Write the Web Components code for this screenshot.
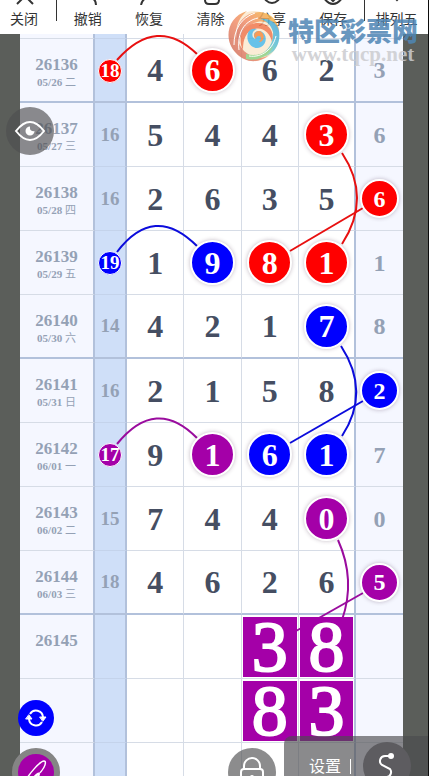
<!DOCTYPE html>
<html lang="zh-CN">
<head>
<meta charset="UTF-8">
<meta name="viewport" content="width=device-width, initial-scale=1">
<title>排列五</title>
<style>
    :root {
        --ink: #454e62;
        --muted: #94a1b5;
        --line: #d6dce6;
        --line-strong: #b2c1db;
        --side: #f5f7ff;
        --sum: #cfdff8;
        --red: #ff0000;
        --blue: #0000ff;
        --purple: #a400a8;
        --sans: "Noto Sans CJK SC", "Noto Sans", sans-serif;
        --serif: "Liberation Serif", "Noto Sans CJK SC", serif;
    }
    body {
        margin: 0;
        background: #5b5e5a;
        font-family: var(--sans);
    }
</style>
</head>
<body>
<trend-app>
    <app-toolbar slot="toolbar">
        <tool-button class="first" label="关闭" icon="close"></tool-button>
        <tool-button label="撤销" icon="undo"></tool-button>
        <tool-button label="恢复" icon="redo"></tool-button>
        <tool-button label="清除" icon="clear"></tool-button>
        <tool-button label="分享" icon="share"></tool-button>
        <tool-button label="保存" icon="save"></tool-button>
        <tool-button class="last" label="排列五" icon="more"></tool-button>
    </app-toolbar>
    <trend-board></trend-board>
    <site-watermark slot="overlay"></site-watermark>
    <round-button slot="overlay" class="eye" label="显示" icon="eye"></round-button>
    <round-button slot="overlay" class="refresh" label="刷新" icon="refresh"></round-button>
    <round-button slot="overlay" class="pen" label="画笔" icon="pen"></round-button>
    <round-button slot="overlay" class="lock" label="锁定" icon="lock"></round-button>
    <settings-bar slot="overlay"></settings-bar>
</trend-app>

<script>
const TOOL_ICONS = {
    close: '<path d="M5 23l8-8M21 23l-8-8"/>',
    undo: '<path d="M16 17q4 2 4 7"/>',
    redo: '<path d="M9 17q-4 2-5 7"/>',
    clear: '<path d="M6 10v9q0 4 4 4h6q4 0 4-4v-9M11 14v5M15 14v5"/>',
    share: '<circle cx="12" cy="14" r="8"/>',
    save: '<path d="M3 17q4 6 9 6t9-6M12 10v10M9 17l3 3 3-3"/>',
    more: '<path d="M8 15l4 4 4-4"/>'
};

const ROUND_ICONS = {
    eye: '<path d="M10 24q14-18 28 0q-14 18-28 0z"/><path d="M24 19.500a4.500 4.500 0 1 0 4.500 4.500q-5 1-4.500-4.500z" fill="#fff" stroke="none"/>',
    refresh: '<path d="M18 20a7 7 0 0 1 13 3M30 28a7 7 0 0 1-13-3" stroke-linecap="butt"/><path d="M28 23h6l-3 4zM14 25h6l-3-4z" fill="#fff" stroke="#fff" stroke-width="1"/>',
    pen: '<path d="M13 34C16 27 28 13 32 13S31 25 22 29M22 29C25 25 28 24 27 27S24 32 28 30" stroke-width="1.500"/>',
    lock: '<rect x="13" y="21" width="22" height="16" rx="3"/><path d="M16 21v-3a8 8 0 0 1 16 0v3"/><circle cx="24" cy="29" r="2" fill="#fff" stroke="none"/>',
    path: '<path d="M28 14h-6a5 5 0 0 0-3 9l8 4a5 5 0 0 1-3 8h-7"/><circle cx="28" cy="14" r="3" fill="#fff" stroke="none"/>'
};

class TrendApp extends HTMLElement {
    connectedCallback() {
        this.attachShadow({ mode: 'open' });
        this.shadowRoot.innerHTML = `
            <style>
                :host {
                    display: flex;
                    flex-direction: column;
                    position: relative;
                    height: 100vh;
                    overflow: hidden;
                    box-sizing: border-box;
                    border-right: 1px solid #0c0c0c;
                }
                main {
                    flex: 1;
                    min-height: 0;
                    overflow: hidden;
                    padding: 0 25px 0 20px;
                }
                ::slotted(round-button), ::slotted(settings-bar), ::slotted(site-watermark) {
                    position: absolute;
                    z-index: 5;
                }
                ::slotted(.eye) { left: 6px; top: 107px; }
                ::slotted(.refresh) { left: 18px; bottom: 40px; }
                ::slotted(.pen) { left: 12px; bottom: -20px; }
                ::slotted(.lock) { right: 152px; bottom: -20px; }
                ::slotted(settings-bar) { right: 0; bottom: -16px; }
                ::slotted(site-watermark) { right: 10px; top: 8px; }
            </style>
            <slot name="toolbar"></slot>
            <main><slot></slot></main>
            <slot name="overlay"></slot>
        `;
    }
}
customElements.define('trend-app', TrendApp);

class AppToolbar extends HTMLElement {
    connectedCallback() {
        this.attachShadow({ mode: 'open' });
        this.shadowRoot.innerHTML = `
            <style>
                :host {
                    display: block;
                    background: #fff;
                }
                nav {
                    display: flex;
                    align-items: flex-end;
                    height: 34px;
                    overflow: hidden;
                }
                ::slotted(tool-button) { flex: 1; }
                ::slotted(.first) {
                    flex: 0 0 57px;
                    padding-right: 8px;
                    border-right: 1px solid #333;
                }
                ::slotted(.last) {
                    flex: 0 0 64px;
                    border-left: 1px solid #333;
                }
                ::slotted(.first), ::slotted(.last) {
                    box-sizing: border-box;
                    border-image: linear-gradient(#333 60%, transparent 60%) 1;
                }
            </style>
            <nav><slot></slot></nav>
        `;
    }
}
customElements.define('app-toolbar', AppToolbar);

class ToolButton extends HTMLElement {
    connectedCallback() {
        this.attachShadow({ mode: 'open' });
        this.shadowRoot.innerHTML = `
            <style>
                :host {
                    display: block;
                    height: 34px;
                }
                button {
                    display: flex;
                    flex-direction: column;
                    align-items: center;
                    justify-content: flex-end;
                    gap: 3px;
                    width: 100%;
                    height: 100%;
                    padding: 0 0 6px;
                    border: 0;
                    background: none;
                    color: #333;
                    font: 14px/20px var(--sans);
                    white-space: nowrap;
                }
                svg {
                    flex: none;
                    width: 24px;
                    height: 24px;
                    fill: none;
                    stroke: #333;
                    stroke-width: 2;
                }
            </style>
            <button type="button">
                <svg viewBox="0 0 24 24" aria-hidden="true">${TOOL_ICONS[this.getAttribute('icon')]}</svg>
                <span>${this.getAttribute('label')}</span>
            </button>
        `;
    }
}
customElements.define('tool-button', ToolButton);

// a number on a coloured disc; size is small, medium or large
class NumberBall extends HTMLElement {
    connectedCallback() {
        this.attachShadow({ mode: 'open' });
        this.shadowRoot.innerHTML = `
            <style>
                :host {
                    display: inline-flex;
                    align-items: center;
                    justify-content: center;
                    position: relative;
                    z-index: 2;
                    box-sizing: content-box;
                    width: 41px;
                    height: 41px;
                    border: 2px solid #fff;
                    border-radius: 50%;
                    color: #fff;
                    box-shadow: 0 0 4px rgba(60, 30, 60, 0.3);
                    vertical-align: middle;
                }
                :host([size="small"]) {
                    width: 22px;
                    height: 22px;
                    border-width: 1px;
                    box-shadow: none;
                }
                :host([size="medium"]) {
                    width: 35px;
                    height: 35px;
                }
                :host([color="red"]) { background: var(--red); }
                :host([color="blue"]) { background: var(--blue); }
                :host([color="purple"]) { background: var(--purple); }
            </style>
            <slot></slot>
        `;
    }
}
customElements.define('number-ball', NumberBall);

// [issue, date, weekday, sum, four digits, last digit]
// "r", "b", "p" after a number puts it on a ball, "x" on a square
const ROWS = [
    ['26136', '05/26', '二', '18r', ['4', '6r', '6', '2'], '3', 'thick'],
    ['26137', '05/27', '三', '16', ['5', '4', '4', '3r'], '6'],
    ['26138', '05/28', '四', '16', ['2', '6', '3', '5'], '6r'],
    ['26139', '05/29', '五', '19b', ['1', '9b', '8r', '1r'], '1'],
    ['26140', '05/30', '六', '14', ['4', '2', '1', '7b'], '8', 'thick'],
    ['26141', '05/31', '日', '16', ['2', '1', '5', '8'], '2b'],
    ['26142', '06/01', '一', '17p', ['9', '1p', '6b', '1b'], '7'],
    ['26143', '06/02', '二', '15', ['7', '4', '4', '0p'], '0'],
    ['26144', '06/03', '三', '18', ['4', '6', '2', '6'], '5p', 'thick'],
    ['26145', '', '', '', ['', '', '3x', '8x'], ''],
    ['', '', '', '', ['', '', '8x', '3x'], ''],
    ['', '', '', '', ['', '', '', ''], '']
];

const COLORS = { r: 'red', b: 'blue', p: 'purple' };

function mark(value, size) {
    const flag = value.slice(-1);
    if (flag === 'x') {
        return `<div class="pick">${value.slice(0, -1)}</div>`;
    }
    if (COLORS[flag]) {
        return `<number-ball size="${size}" color="${COLORS[flag]}">${value.slice(0, -1)}</number-ball>`;
    }
    return value;
}

class TrendBoard extends HTMLElement {
    connectedCallback() {
        const body = ROWS.map(([issue, date, day, sum, digits, last, thick]) => `
            <tr class="${thick || ''}">
                <th scope="row"><div class="issue">${issue}</div><div class="date">${date} <span>${day}</span></div></th>
                <td class="sum">${mark(sum, 'small')}</td>
                ${digits.map(d => `<td class="digit">${mark(d, 'large')}</td>`).join('')}
                <td class="tail">${mark(last, 'medium')}</td>
            </tr>`).join('');

        this.attachShadow({ mode: 'open' });
        this.shadowRoot.innerHTML = `
            <style>
                :host {
                    display: block;
                    position: relative;
                    font-family: var(--serif);
                    font-weight: bold;
                }
                table {
                    width: 100%;
                    table-layout: fixed;
                    border-collapse: separate;
                    border-spacing: 0;
                    background: #fff;
                }
                .col-issue { width: 75px; }
                .col-sum { width: 32px; }
                .col-tail { width: 47px; }
                th, td {
                    box-sizing: border-box;
                    height: 64px;
                    padding: 0;
                    text-align: center;
                    vertical-align: middle;
                    border-right: 1px solid var(--line);
                    border-bottom: 1px solid var(--line);
                }
                .lead th, .lead td {
                    height: 5px;
                    padding: 0;
                }
                .thick th, .thick td { border-bottom: 2px solid var(--line-strong); }
                th {
                    padding-top: 3px;
                    background: var(--side);
                    border-right: 2px solid var(--line-strong);
                    color: var(--muted);
                }
                .issue {
                    height: 20px;
                    font-size: 17px;
                    line-height: 20px;
                }
                .date {
                    height: 14px;
                    font-size: 11px;
                    line-height: 14px;
                }
                .date span { font-weight: normal; }
                .sum {
                    background: var(--sum);
                    border-right: 2px solid var(--line-strong);
                    border-bottom-color: #c4d3eb;
                    color: var(--muted);
                    font-size: 19px;
                    line-height: 24px;
                }
                .digit {
                    color: var(--ink);
                    font-size: 32px;
                    line-height: 36px;
                }
                .digit:nth-child(6) { border-right: 2px solid var(--line-strong); }
                .tail {
                    background: var(--side);
                    border-right: 0;
                    color: var(--muted);
                    font-size: 24px;
                    line-height: 28px;
                }
                .pick {
                    position: relative;
                    z-index: 2;
                    height: 60px;
                    margin: 0 1px;
                    background: var(--purple);
                    color: #fff;
                    font-size: 72px;
                    font-weight: normal;
                    line-height: 60px;
                    -webkit-text-stroke: 2px #fff;
                }
                svg {
                    position: absolute;
                    inset: 0;
                    z-index: 1;
                    width: 100%;
                    height: 100%;
                    fill: none;
                    stroke-width: 2;
                    pointer-events: none;
                }
            </style>
            <table>
                <colgroup>
                    <col class="col-issue"><col class="col-sum"><col><col><col><col><col class="col-tail">
                </colgroup>
                <tbody>
                    <tr class="lead"><th></th><td class="sum"></td><td class="digit"></td><td class="digit"></td><td class="digit"></td><td class="digit"></td><td class="tail"></td></tr>
                    ${body}
                </tbody>
            </table>
            <svg viewBox="20 34 383 773" preserveAspectRatio="none" aria-hidden="true">
                <g stroke="#e81010">
                    <path d="M117 60Q157 15 197 54"/>
                    <path d="M342 153Q372 198 342 244"/>
                    <path d="M290 251L363 208"/>
                </g>
                <g stroke="#0c0cdc">
                    <path d="M117 252Q154 203 197 246"/>
                    <path d="M341 346Q371 392 342 436"/>
                    <path d="M290 443L363 401"/>
                </g>
                <g stroke="#9a0c9e">
                    <path d="M117 444Q156 396 197 438"/>
                    <path d="M338 540Q356 580 342 620"/>
                    <path d="M296 631L363 593"/>
                </g>
            </svg>
        `;
    }
}
customElements.define('trend-board', TrendBoard);

class RoundButton extends HTMLElement {
    connectedCallback() {
        this.attachShadow({ mode: 'open' });
        this.shadowRoot.innerHTML = `
            <style>
                :host {
                    display: block;
                    width: 48px;
                    height: 48px;
                }
                :host([icon="refresh"]) {
                    width: 36px;
                    height: 36px;
                }
                button {
                    display: flex;
                    align-items: center;
                    justify-content: center;
                    box-sizing: border-box;
                    width: 100%;
                    height: 100%;
                    padding: 0;
                    border: 0;
                    border-radius: 50%;
                    background: rgba(78, 78, 80, 0.65);
                }
                :host([icon="refresh"]) button { background: var(--blue); }
                :host([icon="path"]) button { background: #5d5c60; }
                :host([icon="pen"]) button {
                    border: 6px solid #858585;
                    background: var(--purple);
                }
                svg {
                    flex: none;
                    width: 48px;
                    height: 48px;
                    fill: none;
                    stroke: #fff;
                    stroke-width: 2;
                    stroke-linecap: round;
                }
            </style>
            <button type="button" aria-label="${this.getAttribute('label')}">
                <svg viewBox="0 0 48 48" aria-hidden="true">${ROUND_ICONS[this.getAttribute('icon')]}</svg>
            </button>
        `;
    }
}
customElements.define('round-button', RoundButton);

class SettingsBar extends HTMLElement {
    connectedCallback() {
        this.attachShadow({ mode: 'open' });
        this.shadowRoot.innerHTML = `
            <style>
                :host {
                    display: flex;
                    align-items: center;
                    box-sizing: border-box;
                    height: 56px;
                    padding: 4px 17px 0 25px;
                    border-radius: 8px 0 0 0;
                    background: rgba(76, 76, 78, 0.65);
                }
                .settings {
                    padding: 0 9px 2px 0;
                    border: 0;
                    background: none;
                    color: #fff;
                    font: 16px/20px var(--sans);
                }
                .bar {
                    width: 1px;
                    height: 15px;
                    margin-right: 12px;
                    background: #fff;
                }
            </style>
            <button type="button" class="settings">设置</button>
            <span class="bar"></span>
            <round-button label="连线" icon="path"></round-button>
        `;
    }
}
customElements.define('settings-bar', SettingsBar);

class SiteWatermark extends HTMLElement {
    connectedCallback() {
        this.attachShadow({ mode: 'open' });
        this.shadowRoot.innerHTML = `
            <style>
                :host {
                    display: flex;
                    align-items: center;
                    gap: 7px;
                    opacity: 0.85;
                    pointer-events: none;
                }
                svg {
                    width: 54px;
                    height: 54px;
                }
                .text { padding-top: 8px; }
                .name {
                    color: #4f86b5;
                    font: 900 26px/28px var(--sans);
                }
                .site {
                    color: #cccccf;
                    font: bold 21px/20px var(--serif);
                    text-align: center;
                }
            </style>
            <svg viewBox="0 0 54 54" aria-hidden="true">
                <defs>
                    <linearGradient id="warm" x1="0" y1="1" x2="1" y2="0">
                        <stop offset="0" stop-color="#c8685c"/>
                        <stop offset="0.5" stop-color="#f2906a"/>
                        <stop offset="1" stop-color="#f4c23c"/>
                    </linearGradient>
                    <linearGradient id="cool" x1="0" y1="1" x2="1" y2="0">
                        <stop offset="0" stop-color="#f3df62"/>
                        <stop offset="0.5" stop-color="#66c6d0"/>
                        <stop offset="1" stop-color="#3f9fd8"/>
                    </linearGradient>
                </defs>
                <circle cx="27" cy="27" r="25" fill="#fbe9cf"/>
                <path d="M9 44C-4 31 0 8 20 2C8 12 5 28 17 42C26 50 36 50 42 46C32 55 18 54 9 44z" fill="url(#warm)"/>
                <path d="M12 36C4 19 16 3 33 3C45 4 53 14 52 25C46 13 33 9 24 16C16 22 12 28 12 36z" fill="url(#warm)"/>
                <path d="M16 41C9 27 18 14 31 14C42 14 48 23 45 33C43 24 36 18 28 20C19 22 16 30 16 41z" fill="#f0784e"/>
                <path d="M52 22C55 40 40 53 24 47C37 47 47 37 46 23C44 15 38 11 33 10C43 9 50 14 52 22z" fill="url(#cool)"/>
                <path d="M21 24C18 33 26 42 34 38C41 34 40 24 33 22C27 21 25 27 29 30C24 29 24 22 30 20C25 19 22 21 21 24z" fill="#4db8e6"/>
                <path d="M29 30C25 27 28 21 33 22C39 25 37 33 32 33C35 30 34 27 32 27C30 27 29 28 29 30z" fill="#f58a3c"/>
                <path d="M19 50C30 53 42 47 47 36C42 43 32 48 19 45z" fill="#8fcf80"/>
                <path d="M7 36C7 20 14 9 28 4M12 41C10 24 17 12 31 9M22 47C35 49 46 40 49 27" fill="none" stroke="#fff" stroke-width="1"/>
            </svg>
            <div class="text">
                <div class="name">特区彩票网</div>
                <div class="site">www.tqcp.net</div>
            </div>
        `;
    }
}
customElements.define('site-watermark', SiteWatermark);
</script>
</body>
</html>
